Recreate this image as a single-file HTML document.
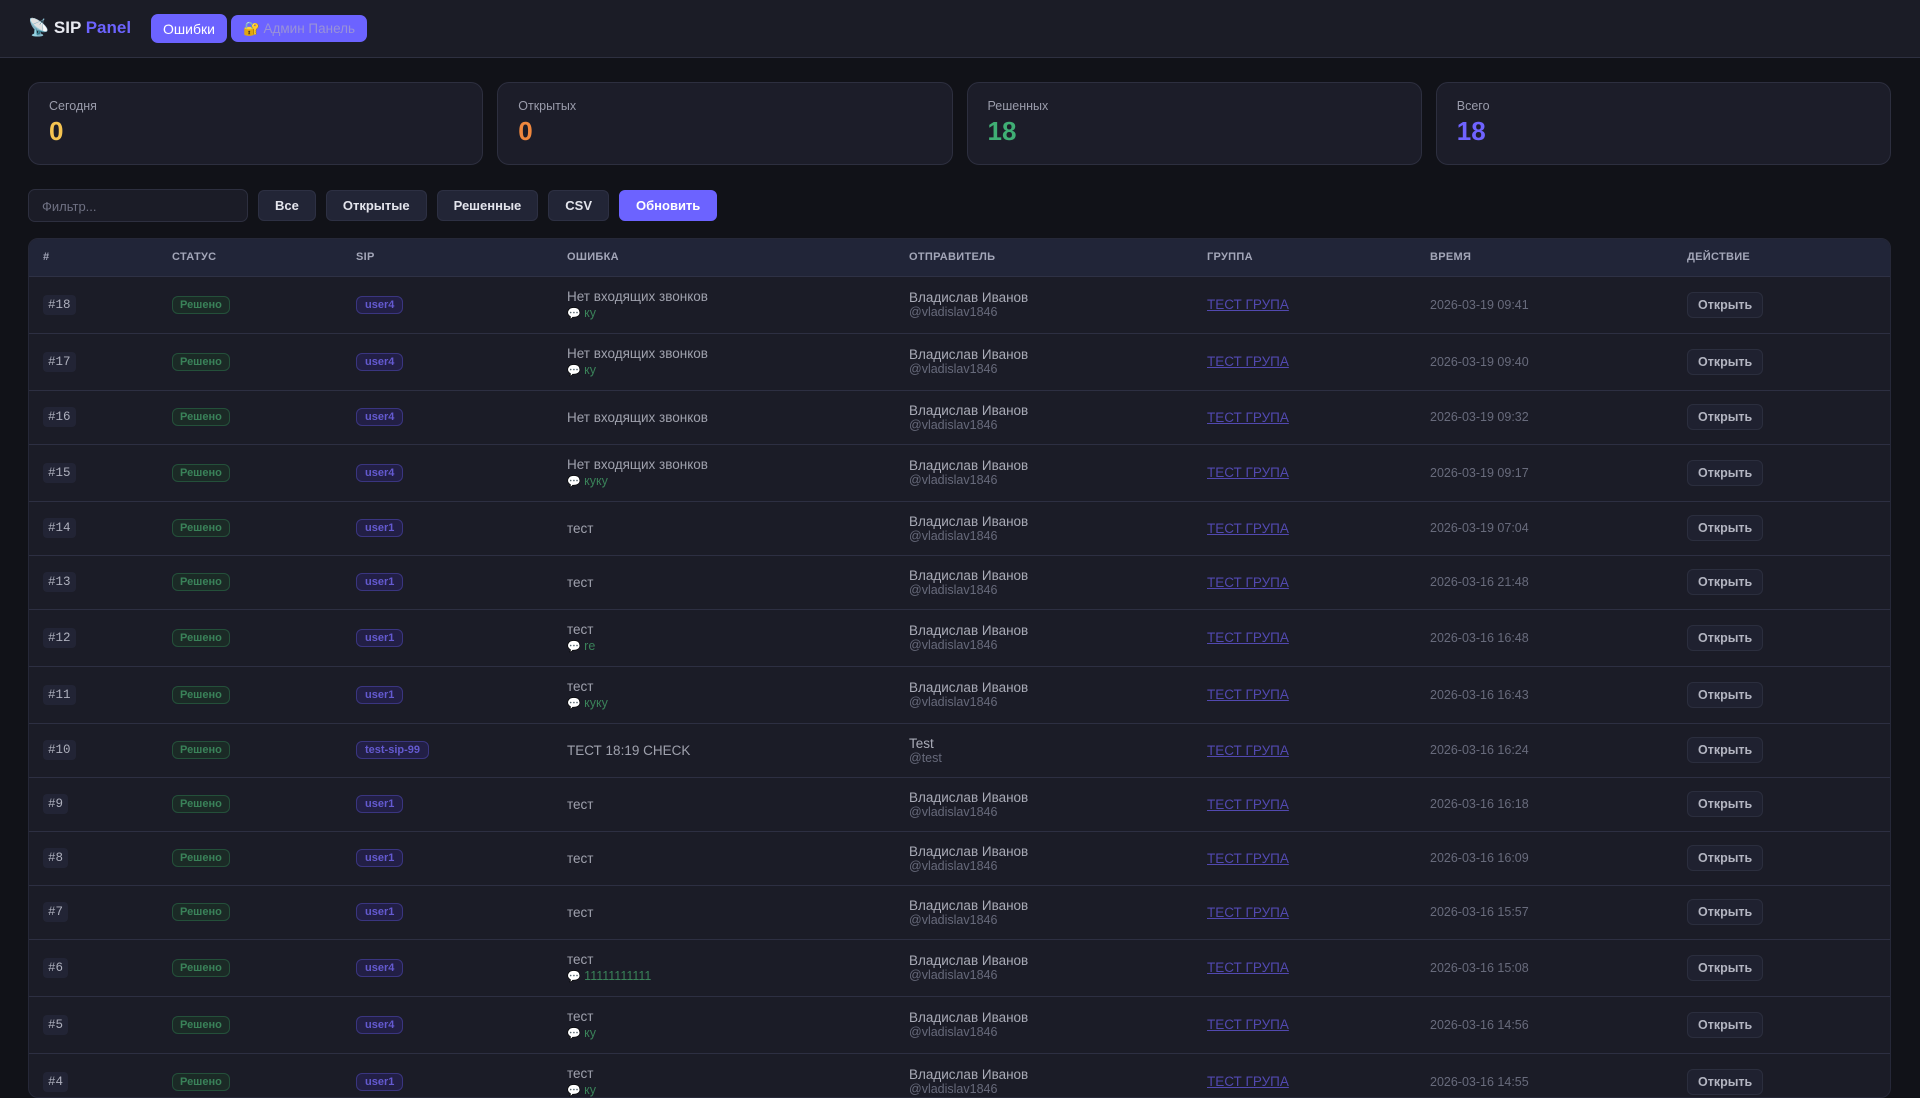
<!DOCTYPE html>
<html><head><meta charset="utf-8"><style>
*{box-sizing:border-box;margin:0;padding:0}
html,body{width:1920px;height:1080px;overflow:hidden}
body{background:#111218;font-family:"Liberation Sans","DejaVu Sans",sans-serif;color:#c9cbd6}
.hdr{height:58px;background:#1b1c26;border-bottom:1px solid #2e3040;position:relative}
.logo{position:absolute;left:28px;top:18px;font-size:17px;font-weight:bold;color:#e8e9f0}
.logo span{color:#6c63ff}
.nb{position:absolute;background:#6c63ff;border-radius:7px;font-size:14px;color:#fff;display:flex;align-items:center;justify-content:center}
.cards{position:absolute;top:82px;left:28px;right:29px;display:flex;gap:14px}
.card{flex:1;height:83px;background:#1c1d29;border:1px solid #2d2f3f;border-radius:12px;padding:16px 20px}
.card .l{font-size:12.5px;color:#9a9cab}
.card .n{font-size:26px;font-weight:bold;margin-top:3px}
.fil{position:absolute;top:189px;left:28px;display:flex;gap:10px;align-items:center}
.inp{width:220px;height:33px;background:#1b1c27;border:1px solid #2d2f3f;border-radius:7px;font-size:13px;color:#6f7183;padding:9px 13px}
.b{height:31px;background:#222536;border:1px solid #2d3043;border-radius:6px;font-size:13px;font-weight:bold;color:#e3e4ec;padding:0 16px;display:flex;align-items:center}
.tbl{position:absolute;top:238px;left:28px;width:1863px;height:860px;background:#1b1c27;border:1px solid #262838;border-radius:10px;overflow:hidden}
table{border-collapse:collapse;width:100%}
th{height:37px;background:#212538;text-align:left;font-size:11px;color:#a3a6b8;font-weight:bold;letter-spacing:.3px;border-bottom:1px solid #2e3145;padding:0}
td{border-bottom:1px solid #2d2f42;font-size:13.5px;color:#9fa1ad;padding:0;vertical-align:middle}
tr.c{height:57px} tr.s{height:54px}
.id{display:inline-block;background:#222435;border-radius:4px;padding:3px 5px;font-size:12.5px;color:#aeb0bd;font-family:"Liberation Mono",monospace}
.st{display:inline-block;border:1px solid #24503a;background:#1b2a26;color:#3a8259;font-size:11px;font-weight:bold;border-radius:6px;padding:2px 7px}
.sip{display:inline-block;border:1px solid #3a3580;background:#221f45;color:#645ad0;font-size:11px;font-weight:bold;border-radius:6px;padding:2px 8px}
.cm{font-size:12.5px;color:#3a8259;margin-top:2px}
.cm i{font-style:normal;color:#cfd0d8;font-size:11px}
.snd{color:#a9abb7}
.h{font-size:12.5px;color:#676a7b}
a{color:#5249b0;text-decoration:underline}
.t{font-size:12.5px;color:#686b7c}
.ob{display:inline-block;background:#1f2130;border:1px solid #2b2e3e;border-radius:6px;padding:5px 10px;font-size:12.5px;font-weight:bold;color:#b3b5c1}
</style></head><body>
<div class="hdr">
<div class="logo">📡 SIP <span>Panel</span></div>
<div class="nb" style="left:151px;top:14px;width:76px;height:29px">Ошибки</div>
<div class="nb" style="left:231px;top:15px;width:136px;height:27px;color:#9992d8;font-size:13.5px">🔐 Админ Панель</div>
</div>
<div class="cards">
<div class="card"><div class="l">Сегодня</div><div class="n" style="color:#f5c451">0</div></div>
<div class="card"><div class="l">Открытых</div><div class="n" style="color:#f0883e">0</div></div>
<div class="card"><div class="l">Решенных</div><div class="n" style="color:#3fae74">18</div></div>
<div class="card"><div class="l">Всего</div><div class="n" style="color:#6f63ff">18</div></div>
</div>
<div class="fil">
<div class="inp">Фильтр...</div>
<div class="b">Все</div><div class="b">Открытые</div><div class="b">Решенные</div><div class="b">CSV</div>
<div class="b" style="background:#6c63ff;border-color:#6c63ff;color:#fff">Обновить</div>
</div>
<div class="tbl"><table>
<colgroup><col style="width:143px"><col style="width:184px"><col style="width:211px"><col style="width:342px"><col style="width:298px"><col style="width:223px"><col style="width:257px"><col></colgroup>
<tr><th style="padding-left:14px">#</th><th>СТАТУС</th><th>SIP</th><th>ОШИБКА</th><th>ОТПРАВИТЕЛЬ</th><th>ГРУППА</th><th>ВРЕМЯ</th><th>ДЕЙСТВИЕ</th></tr>
<tr class="c"><td style="padding-left:14px"><span class="id">#18</span></td><td><span class="st">Решено</span></td><td><span class="sip">user4</span></td><td>Нет входящих звонков<div class="cm"><i>💬</i> ку</div></td><td class="snd">Владислав Иванов<div class="h">@vladislav1846</div></td><td><a>ТЕСТ ГРУПА</a></td><td class="t">2026-03-19 09:41</td><td><span class="ob">Открыть</span></td></tr>
<tr class="c"><td style="padding-left:14px"><span class="id">#17</span></td><td><span class="st">Решено</span></td><td><span class="sip">user4</span></td><td>Нет входящих звонков<div class="cm"><i>💬</i> ку</div></td><td class="snd">Владислав Иванов<div class="h">@vladislav1846</div></td><td><a>ТЕСТ ГРУПА</a></td><td class="t">2026-03-19 09:40</td><td><span class="ob">Открыть</span></td></tr>
<tr class="s"><td style="padding-left:14px"><span class="id">#16</span></td><td><span class="st">Решено</span></td><td><span class="sip">user4</span></td><td>Нет входящих звонков</td><td class="snd">Владислав Иванов<div class="h">@vladislav1846</div></td><td><a>ТЕСТ ГРУПА</a></td><td class="t">2026-03-19 09:32</td><td><span class="ob">Открыть</span></td></tr>
<tr class="c"><td style="padding-left:14px"><span class="id">#15</span></td><td><span class="st">Решено</span></td><td><span class="sip">user4</span></td><td>Нет входящих звонков<div class="cm"><i>💬</i> куку</div></td><td class="snd">Владислав Иванов<div class="h">@vladislav1846</div></td><td><a>ТЕСТ ГРУПА</a></td><td class="t">2026-03-19 09:17</td><td><span class="ob">Открыть</span></td></tr>
<tr class="s"><td style="padding-left:14px"><span class="id">#14</span></td><td><span class="st">Решено</span></td><td><span class="sip">user1</span></td><td>тест</td><td class="snd">Владислав Иванов<div class="h">@vladislav1846</div></td><td><a>ТЕСТ ГРУПА</a></td><td class="t">2026-03-19 07:04</td><td><span class="ob">Открыть</span></td></tr>
<tr class="s"><td style="padding-left:14px"><span class="id">#13</span></td><td><span class="st">Решено</span></td><td><span class="sip">user1</span></td><td>тест</td><td class="snd">Владислав Иванов<div class="h">@vladislav1846</div></td><td><a>ТЕСТ ГРУПА</a></td><td class="t">2026-03-16 21:48</td><td><span class="ob">Открыть</span></td></tr>
<tr class="c"><td style="padding-left:14px"><span class="id">#12</span></td><td><span class="st">Решено</span></td><td><span class="sip">user1</span></td><td>тест<div class="cm"><i>💬</i> re</div></td><td class="snd">Владислав Иванов<div class="h">@vladislav1846</div></td><td><a>ТЕСТ ГРУПА</a></td><td class="t">2026-03-16 16:48</td><td><span class="ob">Открыть</span></td></tr>
<tr class="c"><td style="padding-left:14px"><span class="id">#11</span></td><td><span class="st">Решено</span></td><td><span class="sip">user1</span></td><td>тест<div class="cm"><i>💬</i> куку</div></td><td class="snd">Владислав Иванов<div class="h">@vladislav1846</div></td><td><a>ТЕСТ ГРУПА</a></td><td class="t">2026-03-16 16:43</td><td><span class="ob">Открыть</span></td></tr>
<tr class="s"><td style="padding-left:14px"><span class="id">#10</span></td><td><span class="st">Решено</span></td><td><span class="sip">test-sip-99</span></td><td>ТЕСТ 18:19 CHECK</td><td class="snd">Test<div class="h">@test</div></td><td><a>ТЕСТ ГРУПА</a></td><td class="t">2026-03-16 16:24</td><td><span class="ob">Открыть</span></td></tr>
<tr class="s"><td style="padding-left:14px"><span class="id">#9</span></td><td><span class="st">Решено</span></td><td><span class="sip">user1</span></td><td>тест</td><td class="snd">Владислав Иванов<div class="h">@vladislav1846</div></td><td><a>ТЕСТ ГРУПА</a></td><td class="t">2026-03-16 16:18</td><td><span class="ob">Открыть</span></td></tr>
<tr class="s"><td style="padding-left:14px"><span class="id">#8</span></td><td><span class="st">Решено</span></td><td><span class="sip">user1</span></td><td>тест</td><td class="snd">Владислав Иванов<div class="h">@vladislav1846</div></td><td><a>ТЕСТ ГРУПА</a></td><td class="t">2026-03-16 16:09</td><td><span class="ob">Открыть</span></td></tr>
<tr class="s"><td style="padding-left:14px"><span class="id">#7</span></td><td><span class="st">Решено</span></td><td><span class="sip">user1</span></td><td>тест</td><td class="snd">Владислав Иванов<div class="h">@vladislav1846</div></td><td><a>ТЕСТ ГРУПА</a></td><td class="t">2026-03-16 15:57</td><td><span class="ob">Открыть</span></td></tr>
<tr class="c"><td style="padding-left:14px"><span class="id">#6</span></td><td><span class="st">Решено</span></td><td><span class="sip">user4</span></td><td>тест<div class="cm"><i>💬</i> 11111111111</div></td><td class="snd">Владислав Иванов<div class="h">@vladislav1846</div></td><td><a>ТЕСТ ГРУПА</a></td><td class="t">2026-03-16 15:08</td><td><span class="ob">Открыть</span></td></tr>
<tr class="c"><td style="padding-left:14px"><span class="id">#5</span></td><td><span class="st">Решено</span></td><td><span class="sip">user4</span></td><td>тест<div class="cm"><i>💬</i> ку</div></td><td class="snd">Владислав Иванов<div class="h">@vladislav1846</div></td><td><a>ТЕСТ ГРУПА</a></td><td class="t">2026-03-16 14:56</td><td><span class="ob">Открыть</span></td></tr>
<tr class="c"><td style="padding-left:14px"><span class="id">#4</span></td><td><span class="st">Решено</span></td><td><span class="sip">user1</span></td><td>тест<div class="cm"><i>💬</i> ку</div></td><td class="snd">Владислав Иванов<div class="h">@vladislav1846</div></td><td><a>ТЕСТ ГРУПА</a></td><td class="t">2026-03-16 14:55</td><td><span class="ob">Открыть</span></td></tr>
</table></div>
</body></html>
